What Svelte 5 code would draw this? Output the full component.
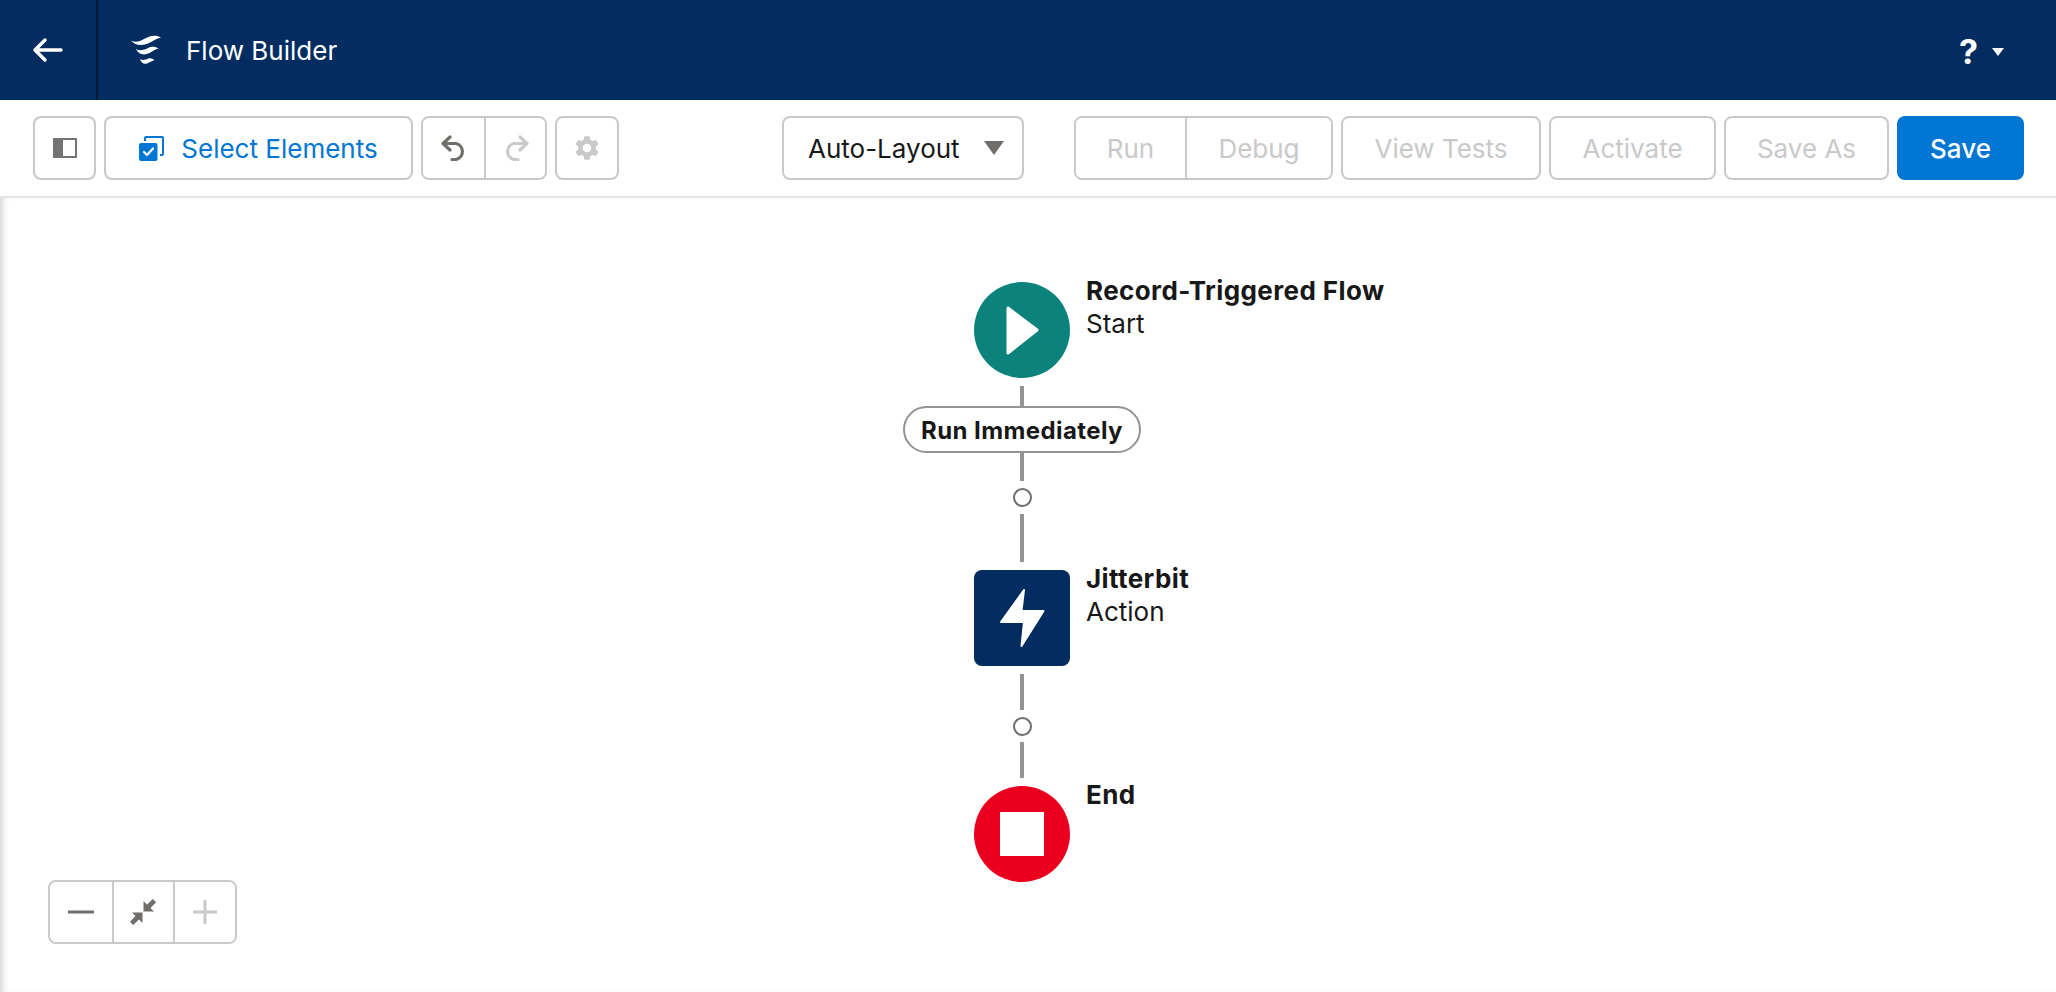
<script>
  const actions = [
    { label: "View Tests", cls: "w-tests" },
    { label: "Activate", cls: "w-activate" },
    { label: "Save As", cls: "w-saveas" },
  ];
</script>

<div class="page">
  <header class="topbar">
    <button class="back" aria-label="Back">
      <svg width="32" height="26" viewBox="0 0 32 26"><path d="M30 13H4M14 3 4 13l10 10" fill="none" stroke="#fff" stroke-width="3.4" stroke-linecap="round" stroke-linejoin="round" /></svg>
    </button>
    <svg class="logo" width="30" height="30" viewBox="0 0 30 30">
      <path d="M0 5.500C5 8 9 6.500 14 3.500 19 .5 25 -.5 30 2.500 26 3 24 5 20 7 13 11 5 11.500 0 5.500Z" fill="#fff" />
      <path d="M5 14C9 16.500 13 15 17 13 20 11.500 24 11 27.500 13.500 24 14 22.500 16 18.500 18 13 20.500 8 20 5 14Z" fill="#fff" />
      <path d="M9 24C12 26 15 24.500 17.500 23.500 19.500 23 22 23.500 23.500 25.500 20.500 25.500 19 27.500 16 28.500 13 29.500 10 28 9 24Z" fill="#fff" />
    </svg>
    <span class="title">Flow Builder</span>
    <div class="help">
      <span class="mark">?</span>
      <svg width="12" height="8" viewBox="0 0 12 8"><path d="M0 0h12L6 8Z" fill="#fff" /></svg>
    </div>
  </header>

  <div class="toolbar">
    <button class="btn w-panel" aria-label="Toggle panel">
      <svg width="24" height="20" viewBox="0 0 24 20">
        <rect x="1" y="1" width="22" height="18" fill="none" stroke="#747474" stroke-width="2" />
        <rect x="1" y="1" width="9" height="18" fill="#747474" />
      </svg>
    </button>
    <button class="btn w-select link">
      <svg width="25" height="25" viewBox="0 0 25 25">
        <path d="M6 5V2a1 1 0 0 1 1-1h16a1 1 0 0 1 1 1v16a1 1 0 0 1-1 1h-2" fill="none" stroke="#0176d3" stroke-width="2" />
        <rect x="0" y="7" width="18.500" height="18" rx="2" fill="#0176d3" />
        <path d="M5 16l3 3 6-6.500" fill="none" stroke="#fff" stroke-width="2.200" stroke-linecap="round" stroke-linejoin="round" />
      </svg>
      Select Elements
    </button>
    <div class="group undo">
      <button class="seg w-undo" aria-label="Undo">
        <svg width="26" height="26" viewBox="0 0 26 26"><path d="M9 2 2 8.500 9 15M2 8.500h13a8.200 8.200 0 0 1 0 16H11" fill="none" stroke="#706e6b" stroke-width="3.200" stroke-linecap="round" stroke-linejoin="round" /></svg>
      </button>
      <button class="seg w-undo" aria-label="Redo">
        <svg width="26" height="26" viewBox="0 0 26 26"><path d="M17 2l7 6.500L17 15M24 8.500H11a8.200 8.200 0 0 0 0 16h4" fill="none" stroke="#c9c9c9" stroke-width="3.200" stroke-linecap="round" stroke-linejoin="round" /></svg>
      </button>
    </div>
    <button class="btn w-gear" aria-label="Settings">
      <svg width="26" height="26" viewBox="0 0 26 26">
        <path fill="#c9c9c9" fill-rule="evenodd" d="M10.500 0h5l.8 3.600 2.200 1.200 3.500-1.100 2.500 4.300-2.700 2.500v2.500l2.700 2.500-2.500 4.300-3.500-1.100-2.200 1.200-.8 3.600h-5l-.8-3.600-2.200-1.200-3.500 1.100L1.500 15.500l2.700-2.500v-2.500L1.500 8l2.500-4.300 3.500 1.100 2.200-1.200ZM13 7.500a4.300 4.300 0 1 0 0 8.600 4.300 4.300 0 0 0 0-8.600Z" transform="translate(0 1.200)" />
      </svg>
    </button>

    <button class="btn w-layout plain">
      Auto-Layout
      <svg width="20" height="14" viewBox="0 0 20 14"><path d="M0 0h20L10 14Z" fill="#706e6b" /></svg>
    </button>

    <div class="right">
      <div class="group">
        <button class="seg w-run off">Run</button>
        <button class="seg w-debug off">Debug</button>
      </div>
      {#each actions as a}
        <button class="btn off {a.cls}">{a.label}</button>
      {/each}
      <button class="btn w-save primary">Save</button>
    </div>
  </div>

  <main class="canvas">
    <div class="flow">
      <div class="node circle start">
        <svg width="96" height="96" viewBox="0 0 96 96"><path d="M34 26 63 48 34 71Z" fill="#fff" stroke="#fff" stroke-width="3" stroke-linejoin="round" /></svg>
        <div class="label"><strong>Record-Triggered Flow</strong><span>Start</span></div>
      </div>
      <div class="line l20"></div>
      <div class="pill">Run Immediately</div>
      <div class="line l28"></div>
      <div class="dot"></div>
      <div class="line l48"></div>
      <div class="node action">
        <svg width="96" height="96" viewBox="0 0 96 96"><path d="M50 20 47.500 41 69.500 41 47.500 76 50 52 27 52Z" fill="#fff" stroke="#fff" stroke-width="2" stroke-linejoin="round" /></svg>
        <div class="label"><strong>Jitterbit</strong><span>Action</span></div>
      </div>
      <div class="line l36 first"></div>
      <div class="dot"></div>
      <div class="line l36"></div>
      <div class="node circle end">
        <div class="stop"></div>
        <div class="label"><strong>End</strong></div>
      </div>
    </div>

    <div class="zoomer group">
      <button class="seg w-zoom" aria-label="Zoom out">
        <svg width="26" height="4" viewBox="0 0 26 4"><rect width="26" height="3" y=".5" fill="#706e6b" /></svg>
      </button>
      <button class="seg w-zoom" aria-label="Fit">
        <svg width="26" height="26" viewBox="0 0 26 26">
          <path fill="#706e6b" d="M13.500 2V12.500H24L20.500 9 26 3.200 22.800 0 17 5.500ZM12.500 13.500H2L5.500 17 0 22.800 3.200 26 9 20.500 12.500 24Z" />
        </svg>
      </button>
      <button class="seg w-zoom" aria-label="Zoom in">
        <svg width="24" height="24" viewBox="0 0 24 24"><path d="M12 0v24M0 12h24" stroke="#c9c9c9" stroke-width="3" /></svg>
      </button>
    </div>
  </main>
</div>

<style>
  :global(body) {
    margin: 0;
    background: #fff;
    overflow: hidden;
  }

  .page {
    width: 2056px;
    height: 992px;
    display: flex;
    flex-direction: column;
    font-family: Inter, "Noto Sans", sans-serif;
    color: #181818;
  }

  button {
    font: inherit;
    background: #fff;
    padding: 0;
    display: flex;
    align-items: center;
    justify-content: center;
    cursor: pointer;
  }

  .topbar {
    height: 100px;
    flex: none;
    background: #032d60;
    display: flex;
    align-items: center;
    color: #fff;
  }

  .back {
    width: 98px;
    height: 100px;
    background: none;
    border: none;
    border-right: 2px solid #01162f;
    padding-right: 2px;
  }

  .logo {
    margin-left: 33px;
  }

  .title {
    margin-left: 25px;
    margin-top: 2px;
    font-size: 26px;
    line-height: 1;
  }

  .help {
    margin-left: auto;
    margin-right: 52px;
    padding-top: 4px;
    display: flex;
    align-items: center;
    gap: 14px;
  }

  .mark {
    font-size: 34px;
    font-weight: 700;
    line-height: 1;
  }

  .toolbar {
    height: 98px;
    flex: none;
    box-sizing: border-box;
    padding: 16px 32px 0 33px;
    border-bottom: 2px solid #e5e5e5;
    display: flex;
    align-items: flex-start;
    gap: 8px;
    font-size: 26px;
  }

  .btn,
  .group {
    height: 64px;
    box-sizing: border-box;
    border: 2px solid #c9c9c9;
    border-radius: 8px;
  }

  .group {
    display: flex;
    background: #fff;
  }

  .seg {
    border: none;
    border-left: 2px solid #c9c9c9;
    height: 100%;
  }

  .seg:first-child {
    border-left: none;
    border-radius: 6px 0 0 6px;
  }

  .seg:last-child {
    border-radius: 0 6px 6px 0;
  }

  .link {
    color: #0176d3;
    gap: 17px;
  }

  .plain {
    color: #181818;
    gap: 24px;
    margin-left: 155px;
    justify-content: flex-start;
    padding-left: 24px;
  }

  .off {
    color: #c9c9c9;
  }

  .primary {
    background: #0176d3;
    border-color: #0176d3;
    color: #fff;
    font-weight: 500;
  }

  .right {
    margin-left: auto;
    display: flex;
    gap: 8px;
  }

  .w-panel { width: 63px; }
  .w-select { width: 309px; }
  .w-undo { width: 61px; }
  .w-gear { width: 64px; }
  .w-layout { width: 242px; }
  .w-run { width: 109px; }
  .w-debug { width: 146px; }
  .w-tests { width: 200px; }
  .w-activate { width: 167px; }
  .w-saveas { width: 165px; }
  .w-save { width: 127px; }
  .w-zoom { width: 61.5px; }

  .canvas {
    flex: 1;
    position: relative;
    box-shadow: inset 7px 0 6px -4px rgba(0, 0, 0, 0.16);
  }

  .flow {
    padding-top: 84px;
    width: 2044px;
    display: flex;
    flex-direction: column;
    align-items: center;
  }

  .node {
    width: 96px;
    height: 96px;
    position: relative;
    flex: none;
    display: flex;
    align-items: center;
    justify-content: center;
  }

  .circle {
    border-radius: 50%;
  }

  .start { background: #0b827c; }
  .end { background: #ea001e; margin-top: 8px; }

  .action {
    background: #032d60;
    border-radius: 8px;
    margin-top: 8px;
  }

  .stop {
    width: 44px;
    height: 44px;
    background: #fff;
  }

  .label {
    position: absolute;
    left: 112px;
    top: -8px;
    display: flex;
    flex-direction: column;
    white-space: nowrap;
    font-size: 26px;
    line-height: 33px;
  }

  .label strong {
    font-weight: 700;
    letter-spacing: 0.4px;
  }

  .line {
    width: 4px;
    background: #939393;
    flex: none;
  }

  .l20 { height: 20px; margin-top: 8px; }
  .l28 { height: 28px; }
  .l48 { height: 48px; margin-top: 7px; }
  .l36 { height: 36px; margin-top: 6px; }
  .l36.first { margin-top: 8px; }

  .pill {
    box-sizing: border-box;
    width: 238px;
    height: 47px;
    padding-top: 2px;
    border: 2px solid #939393;
    border-radius: 24px;
    display: flex;
    align-items: center;
    justify-content: center;
    font-size: 24px;
    font-weight: 700;
    letter-spacing: 0.4px;
    flex: none;
  }

  .dot {
    box-sizing: border-box;
    width: 19px;
    height: 19px;
    margin-top: 7px;
    border: 2px solid #706e6b;
    border-radius: 50%;
    flex: none;
  }

  .zoomer {
    position: absolute;
    left: 48px;
    bottom: 48px;
  }
</style>
